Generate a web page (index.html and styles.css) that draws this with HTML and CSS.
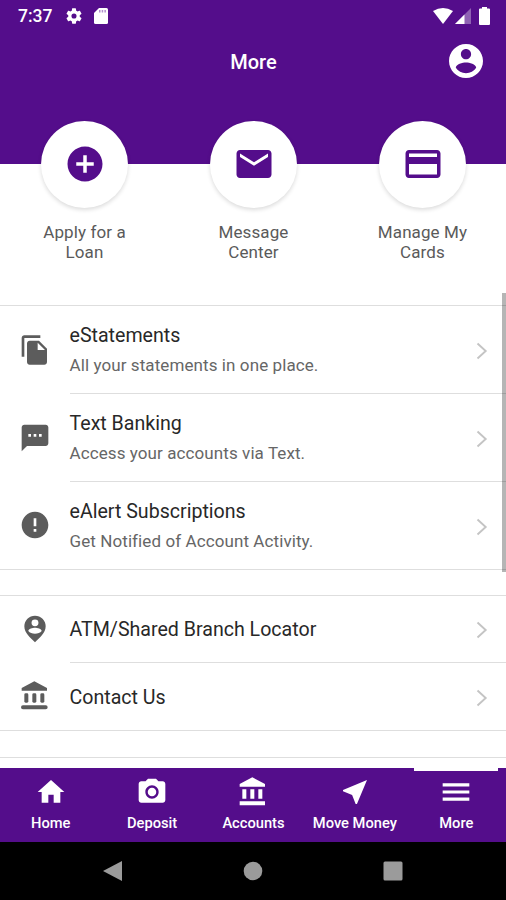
FILE: index.html
```
<!DOCTYPE html>
<html lang="en">
<head>
<meta charset="utf-8">
<title>More</title>
<link rel="stylesheet" href="styles.css">
</head>
<body>
<svg class="defs" aria-hidden="true">
  <symbol id="bank" viewBox="0 0 24 24"><path d="M4 10v7h3v-7H4zm6 0v7h3v-7h-3zM2 22h19v-3H2v3zm14-12v7h3v-7h-3zm-4.500-9L2 6v2h19V6l-9.500-5z"/></symbol>
  <symbol id="chevron" viewBox="0 0 12 18"><path d="M1.500 1.500 9.700 9l-8.200 7.500" fill="none" stroke="#c4c4c4" stroke-width="1.900"/></symbol>
</svg>
<div class="screen">
  <header class="header">
    <div class="status">
      <span class="time">7:37</span>
      <svg class="gear" viewBox="2 2 20 20"><path d="M19.140 12.940c.040-.3.060-.61.060-.94 0-.32-.020-.64-.070-.94l2.030-1.580a.49.49 0 0 0 .12-.61l-1.920-3.320a.488.488 0 0 0-.59-.22l-2.390.96c-.5-.38-1.030-.7-1.620-.94l-.36-2.540a.484.484 0 0 0-.48-.41h-3.840c-.24 0-.43.17-.47.41l-.36 2.540c-.59.24-1.130.57-1.620.94l-2.390-.96a.488.488 0 0 0-.59.22L2.740 8.870a.47.47 0 0 0 .12.61l2.030 1.580c-.05.3-.09.63-.09.94s.02.64.07.94l-2.030 1.580a.49.49 0 0 0-.12.61l1.920 3.320c.12.22.37.29.59.22l2.390-.96c.5.38 1.030.7 1.620.94l.36 2.540c.05.24.24.41.48.41h3.840c.24 0 .44-.17.47-.41l.36-2.540c.59-.24 1.130-.56 1.620-.94l2.390.96c.22.08.47 0 .59-.22l1.920-3.320a.47.47 0 0 0-.12-.61zM12 15.200A3.200 3.200 0 1 1 12 8.800a3.200 3.200 0 0 1 0 6.400z"/></svg>
      <svg class="sd" viewBox="0 0 14 16"><path d="M5 0h7.500Q14 0 14 1.500v13q0 1.500-1.500 1.500h-11Q0 16 0 14.500V5z"/><path class="slots" d="M5 2h1.500v2.500H5zM7.700 2h1.500v2.500H7.700zM10.400 2h1.500v2.500h-1.500z"/></svg>
      <span class="spacer"></span>
      <svg class="wifi" viewBox="0 0 20 16"><path d="M0 3Q10-3 20 3L10 16z"/></svg>
      <svg class="signal" viewBox="0 0 16 16"><path d="M16 0v16H0z" opacity=".35"/><path d="M9.500 6.500V16H0z"/></svg>
      <svg class="battery" viewBox="0 0 11 18"><path d="M3 0h5v1.500h2q1 0 1 1V17q0 1-1 1H1q-1 0-1-1V2.500q0-1 1-1h2z"/></svg>
    </div>
    <div class="titlebar">
      <h1>More</h1>
      <svg class="account" viewBox="2 2 20 20"><path d="M12 2C6.480 2 2 6.480 2 12s4.480 10 10 10 10-4.480 10-10S17.520 2 12 2zm0 3c1.660 0 3 1.340 3 3s-1.340 3-3 3-3-1.340-3-3 1.340-3 3-3zm0 14.200c-2.500 0-4.710-1.280-6-3.220.03-1.990 4-3.080 6-3.080 1.990 0 5.970 1.090 6 3.080-1.290 1.940-3.500 3.220-6 3.220z"/></svg>
    </div>
  </header>

  <section class="actions">
    <div class="action">
      <div class="disc"><svg viewBox="0 0 24 24"><path d="M12 2C6.480 2 2 6.480 2 12s4.480 10 10 10 10-4.480 10-10S17.520 2 12 2zm5 11h-4v4h-2v-4H7v-2h4V7h2v4h4v2z"/></svg></div>
      <p>Apply for a<br>Loan</p>
    </div>
    <div class="action">
      <div class="disc"><svg viewBox="0 0 24 24"><path d="M20 4H4c-1.100 0-1.990.9-1.990 2L2 18c0 1.100.9 2 2 2h16c1.100 0 2-.9 2-2V6c0-1.100-.9-2-2-2zm0 4l-8 5-8-5V6l8 5 8-5v2z"/></svg></div>
      <p>Message<br>Center</p>
    </div>
    <div class="action">
      <div class="disc"><svg viewBox="0 0 24 24"><path d="M20 4H4c-1.110 0-1.990.89-1.990 2L2 18c0 1.110.89 2 2 2h16c1.110 0 2-.89 2-2V6c0-1.110-.89-2-2-2zm0 14H4v-6h16v6zm0-10H4V6h16v2z"/></svg></div>
      <p>Manage My<br>Cards</p>
    </div>
  </section>

  <main class="lists">
    <div class="scrollbar"></div>
    <ul class="group">
      <li class="row tall">
        <svg class="icon" viewBox="0 0 24 24"><path d="M16 1H4c-1.100 0-2 .9-2 2v14h2V3h12V1zm-1 4l6 6v10c0 1.100-.9 2-2 2H7.990C6.890 23 6 22.100 6 21l.01-14c0-1.100.89-2 1.990-2h7zm-1 7h5.500L14 6.500V12z"/></svg>
        <div class="body"><div><h2>eStatements</h2><p>All your statements in one place.</p></div><svg class="chevron"><use href="#chevron"/></svg></div>
      </li>
      <li class="row tall">
        <svg class="icon" viewBox="0 0 24 24"><path d="M20 2H4c-1.100 0-1.990.9-1.990 2L2 22l4-4h14c1.100 0 2-.9 2-2V4c0-1.100-.9-2-2-2zM9 11H7V9h2v2zm4 0h-2V9h2v2zm4 0h-2V9h2v2z"/></svg>
        <div class="body"><div><h2>Text Banking</h2><p>Access your accounts via Text.</p></div><svg class="chevron"><use href="#chevron"/></svg></div>
      </li>
      <li class="row tall">
        <svg class="icon" viewBox="0 0 24 24"><path d="M12 2C6.480 2 2 6.480 2 12s4.480 10 10 10 10-4.480 10-10S17.520 2 12 2zm1 15h-2v-2h2v2zm0-4h-2V7h2v6z"/></svg>
        <div class="body"><div><h2>eAlert Subscriptions</h2><p>Get Notified of Account Activity.</p></div><svg class="chevron"><use href="#chevron"/></svg></div>
      </li>
    </ul>
    <ul class="group">
      <li class="row">
        <svg class="icon" viewBox="0 0 24 24"><path fill-rule="evenodd" d="M12 2a8 8 0 0 0-8 8c0 5 4.500 8.500 8 12 3.500-3.500 8-7 8-12a8 8 0 0 0-8-8zm0 2.800a2.600 2.600 0 1 1 0 5.200 2.600 2.600 0 0 1 0-5.200zM7 13.500c0-1.700 3.300-2.500 5-2.500s5 .8 5 2.500c-1 1.300-3 2-5 2s-4-.7-5-2z"/></svg>
        <div class="body"><h2>ATM/Shared Branch Locator</h2><svg class="chevron"><use href="#chevron"/></svg></div>
      </li>
      <li class="row">
        <svg class="icon" viewBox="0 0 24 24"><path d="M3 19h17a1 1 0 0 1 0 3H3a1 1 0 0 1 0-3zM11.500 1 21 6v2H2V6z"/><rect x="4" y="10" width="3" height="7" rx="1"/><rect x="10" y="10" width="3" height="7" rx="1"/><rect x="16" y="10" width="3" height="7" rx="1"/></svg>
        <div class="body"><h2>Contact Us</h2><svg class="chevron"><use href="#chevron"/></svg></div>
      </li>
    </ul>
    <div class="group next"></div>
  </main>

  <nav class="tabs">
    <div class="tab"><svg viewBox="0 0 24 24"><path d="M10 20v-6h4v6h5v-8h3L12 3 2 12h3v8z"/></svg><span>Home</span></div>
    <div class="tab"><svg viewBox="0 0 24 24"><circle cx="12" cy="12" r="3.200"/><path d="M9 2L7.170 4H4c-1.100 0-2 .9-2 2v12c0 1.100.9 2 2 2h16c1.100 0 2-.9 2-2V6c0-1.100-.9-2-2-2h-3.170L15 2H9zm3 15c-2.760 0-5-2.240-5-5s2.240-5 5-5 5 2.240 5 5-2.240 5-5 5z"/></svg><span>Deposit</span></div>
    <div class="tab"><svg><use href="#bank"/></svg><span>Accounts</span></div>
    <div class="tab"><svg viewBox="0 0 24 24"><path d="M21 3L3 10.530v.98l6.840 2.650L12.480 21h.98L21 3z"/></svg><span>Move Money</span></div>
    <div class="tab active"><svg viewBox="0 0 24 24"><path d="M2 18.500h20v-2.300H2zM2 13.200h20v-2.300H2zM2 5.500v2.300h20V5.500z"/></svg><span>More</span></div>
  </nav>

  <footer class="system">
    <svg viewBox="0 0 20 20"><path d="M19 0v20L0 10z"/></svg>
    <svg viewBox="0 0 20 20"><circle cx="10" cy="10" r="9.300"/></svg>
    <svg viewBox="0 0 20 20"><rect x=".5" y=".5" width="19" height="19" rx="1.500"/></svg>
  </footer>
</div>
</body>
</html>
```
FILE: styles.css
```
* { box-sizing: border-box; margin: 0; padding: 0; }
body { font-family: Roboto, "Liberation Sans", sans-serif; background: #fff; }
svg { display: block; flex: none; }
.defs { display: none; }

.screen { width: 506px; height: 900px; display: flex; flex-direction: column; overflow: hidden; }

.header { height: 163.5px; flex: none; background: #540d8b; color: #fff; fill: #fff; }
.status { display: flex; align-items: center; height: 31px; padding: 0 16.5px 0 18px; }
.time { width: 48px; font-size: 17.5px; font-weight: 500; }
.gear { width: 16px; height: 16px; }
.sd { width: 14px; height: 16px; margin-left: 12px; }
.slots { fill: #b18fce; }
.spacer { flex: 1; }
.wifi { width: 20px; height: 16px; }
.signal { width: 16px; height: 16px; margin: 0 8px 0 2px; }
.battery { width: 11px; height: 18px; }
.titlebar { display: grid; grid-template-columns: 1fr auto 1fr; align-items: center; height: 60px; padding: 0 23px 0 24px; }
.titlebar h1 { grid-column: 2; padding-top: 1px; font-size: 20px; font-weight: 500; }
.account { width: 34px; height: 34px; justify-self: end; }

.actions { display: grid; grid-template-columns: repeat(3, 169px); height: 184px; margin-top: -43px; flex: none; }
.action { display: flex; flex-direction: column; align-items: center; }
.disc { width: 87px; height: 87px; display: grid; place-items: center; border-radius: 50%; background: #fff; fill: #540d8b; box-shadow: 0 2px 4px rgba(0, 0, 0, .14); }
.disc svg { width: 42px; height: 42px; }
.action p { margin-top: 14px; font-size: 17px; line-height: 20px; letter-spacing: .1px; text-align: center; color: #5a5a5a; }

.lists { position: relative; flex: 1; min-height: 0; }
.scrollbar { position: absolute; top: -12px; right: 0; width: 4.500px; height: 279px; background: rgba(0, 0, 0, .29); z-index: 1; }
.group { list-style: none; border: solid #dedede; border-width: 1px 0; margin-bottom: 26px; }
.group:has(.tall) { margin-bottom: 25px; }
.row { display: flex; height: 67px; padding-left: 19px; align-items: center; }
.tall { height: 88px; }
.tall:last-child { height: 87px; }
.icon { width: 32px; height: 32px; fill: #5c5c5c; }
.body { flex: 1; display: flex; align-items: center; justify-content: space-between; height: 100%; margin-left: 18.500px; padding-right: 18.500px; border-bottom: 1px solid #dedede; }
.row:last-child .body { border-bottom: 0; }
.body h2 { padding-top: 3px; font-size: 19.600px; line-height: 26px; font-weight: 400; color: #282828; }
.tall h2 { padding-top: 2px; }
.body p { margin-top: 4px; font-size: 17px; line-height: 24px; letter-spacing: .09px; color: #666; }
.chevron { width: 12px; height: 18px; margin-top: 3px; }
.next { height: 10px; margin: 0; border-bottom: 0; }

.tabs { display: grid; grid-template-columns: repeat(5, 101.400px); height: 74.500px; flex: none; background: #540d8b; color: #fff; fill: #fff; position: relative; }
.tab { display: flex; flex-direction: column; align-items: center; padding-top: 8px; }
.tab svg { width: 32px; height: 32px; }
.tab span { margin-top: 5px; font-size: 14.700px; line-height: 20px; font-weight: 500; }
.active { background: linear-gradient(#fff, #fff) center top / 84px 3px no-repeat; }

.system { display: grid; grid-template-columns: 140px 140px 140px; justify-content: center; justify-items: center; align-items: center; height: 58px; flex: none; background: #000; fill: #9b9b9b; }
.system svg { width: 20px; height: 20px; }
```
